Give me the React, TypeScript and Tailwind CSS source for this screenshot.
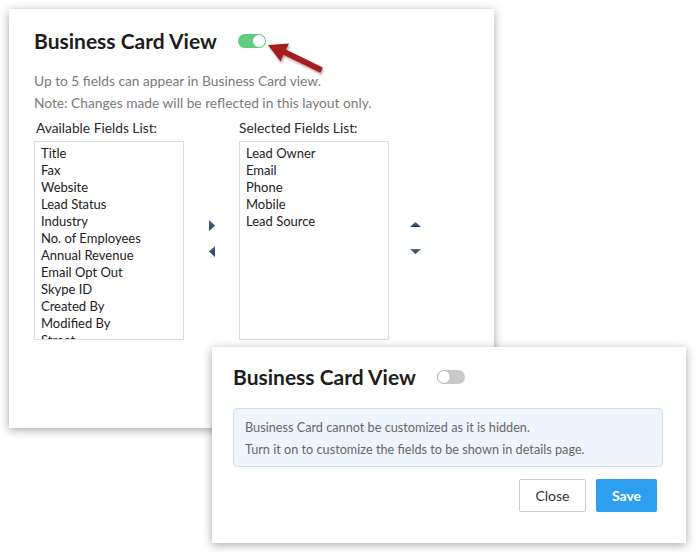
import { type ReactNode } from 'react'

// Business Card View — two dialog states (on / off) laid over each other

const available = [
  'Title',
  'Fax',
  'Website',
  'Lead Status',
  'Industry',
  'No. of Employees',
  'Annual Revenue',
  'Email Opt Out',
  'Skype ID',
  'Created By',
  'Modified By',
  'Street',
]

const selected = ['Lead Owner', 'Email', 'Phone', 'Mobile', 'Lead Source']

function Toggle({ on }: { on: boolean }) {
  return on ? (
    <div className="relative h-[14px] w-[28px] rounded-full bg-[#62cd7e]">
      <div className="absolute right-[1px] top-[1px] h-[12px] w-[12px] rounded-full bg-white" />
    </div>
  ) : (
    <div className="relative h-[14px] w-[28px] rounded-full bg-[#c9c9c9]">
      <div className="absolute left-0 top-0 h-[14px] w-[14px] rounded-full border border-[#b5b5b5] bg-white" />
    </div>
  )
}

function Tri({ dir }: { dir: 'left' | 'right' | 'up' | 'down' }) {
  const vertical = dir === 'up' || dir === 'down'
  const pts: Record<string, string> = {
    right: '0,0 6,5.5 0,11',
    left: '6,0 0,5.5 6,11',
    up: '0,5 5.5,0 11,5',
    down: '0,0 11,0 5.5,5',
  }
  return (
    <svg width={vertical ? 11 : 6} height={vertical ? 5 : 11} viewBox={vertical ? '0 0 11 5' : '0 0 6 11'}>
      <defs>
        <linearGradient id={`g-${dir}`} x1="0" y1="0" x2="0" y2="1">
          <stop offset="0" stopColor="#4b6e92" />
          <stop offset="1" stopColor="#1f3a57" />
        </linearGradient>
      </defs>
      <polygon points={pts[dir]} fill={`url(#g-${dir})`} />
    </svg>
  )
}

function FieldBox({ items }: { items: string[] }) {
  return (
    <div className="mt-[4px] h-[199px] w-[150px] overflow-hidden border border-[#dcdcdc] bg-white pl-[6px] pt-[3px]">
      {items.map((it) => (
        <div key={it} className="text-[13px] leading-[17px] text-[#222]">
          {it}
        </div>
      ))}
    </div>
  )
}

function Panel({ className, children }: { className: string; children: ReactNode }) {
  return (
    <div className={`absolute bg-white shadow-[0_2px_9px_rgba(0,0,0,0.35)] ${className}`}>{children}</div>
  )
}

export default function App() {
  return (
    <div className="relative h-[552px] w-[695px] overflow-hidden bg-white font-['Lato','Liberation_Sans',sans-serif]">
      <Panel className="left-[9px] top-[9px] h-[419px] w-[485px] px-[25px] pt-[19px]">
        <div className="flex h-[26px] items-center">
          <h1 className="text-[21px] font-bold leading-[26px] text-[#1d1d1d]">Business Card View</h1>
          <div className="ml-[21px] mt-[-1px]">
            <Toggle on />
          </div>
        </div>
        <div className="mt-[16px] text-[13.75px] leading-[22px] text-[#7a7a7a]">
          <p>Up to 5 fields can appear in Business Card view.</p>
          <p>Note: Changes made will be reflected in this layout only.</p>
        </div>
        <div className="mt-[5px] flex">
          <div>
            <div className="pl-[2px] text-[13.75px] leading-[18px] text-[#2a2a2a]">Available Fields List:</div>
            <FieldBox items={available} />
          </div>
          <div className="flex w-[55px] flex-col items-center pt-[101px]">
            <Tri dir="right" />
            <div className="mt-[15px]">
              <Tri dir="left" />
            </div>
          </div>
          <div>
            <div className="text-[13.75px] leading-[18px] text-[#2a2a2a]">Selected Fields List:</div>
            <FieldBox items={selected} />
          </div>
          <div className="flex w-[52px] flex-col items-center pt-[103px]">
            <Tri dir="up" />
            <div className="mt-[22px]">
              <Tri dir="down" />
            </div>
          </div>
        </div>
      </Panel>

      {/* red callout arrow pointing at the toggle */}
      <svg className="absolute left-[262px] top-[37px]" width="70" height="44" viewBox="0 0 70 44">
        <defs>
          <filter id="sh" x="-20%" y="-20%" width="150%" height="160%">
            <feDropShadow dx="1" dy="2" stdDeviation="1.2" floodColor="#000" floodOpacity="0.35" />
          </filter>
        </defs>
        <polygon
          points="6,8 27,6.5 24,12.6 60.8,30.6 58.4,35.8 21.4,17.8 18.6,24.6"
          fill="#a51a1a"
          filter="url(#sh)"
        />
      </svg>

      <Panel className="left-[212px] top-[347px] h-[196px] w-[474px] pl-[21px] pt-[17px]">
        <div className="flex h-[26px] items-center">
          <h2 className="text-[21px] font-bold leading-[26px] text-[#1d1d1d]">Business Card View</h2>
          <div className="ml-[21px] mt-[-1px]">
            <Toggle on={false} />
          </div>
        </div>
        <div className="mt-[18px] h-[59px] w-[430px] rounded-[4px] border border-[#cfe0f2] bg-[#eef5fd] pl-[11px] pt-[7px] text-[12.7px] leading-[22px] text-[#666]">
          <p>Business Card cannot be customized as it is hidden.</p>
          <p>Turn it on to customize the fields to be shown in details page.</p>
        </div>
        <div className="mt-[12px] flex w-[424px] justify-end gap-[10px]">
          <button className="h-[33px] w-[67px] rounded-[2px] border border-[#cfcfcf] bg-white text-[14px] text-[#333]">
            Close
          </button>
          <button className="h-[33px] w-[61px] rounded-[2px] bg-[#2e9ff0] text-[14px] font-bold text-white">
            Save
          </button>
        </div>
      </Panel>
    </div>
  )
}
